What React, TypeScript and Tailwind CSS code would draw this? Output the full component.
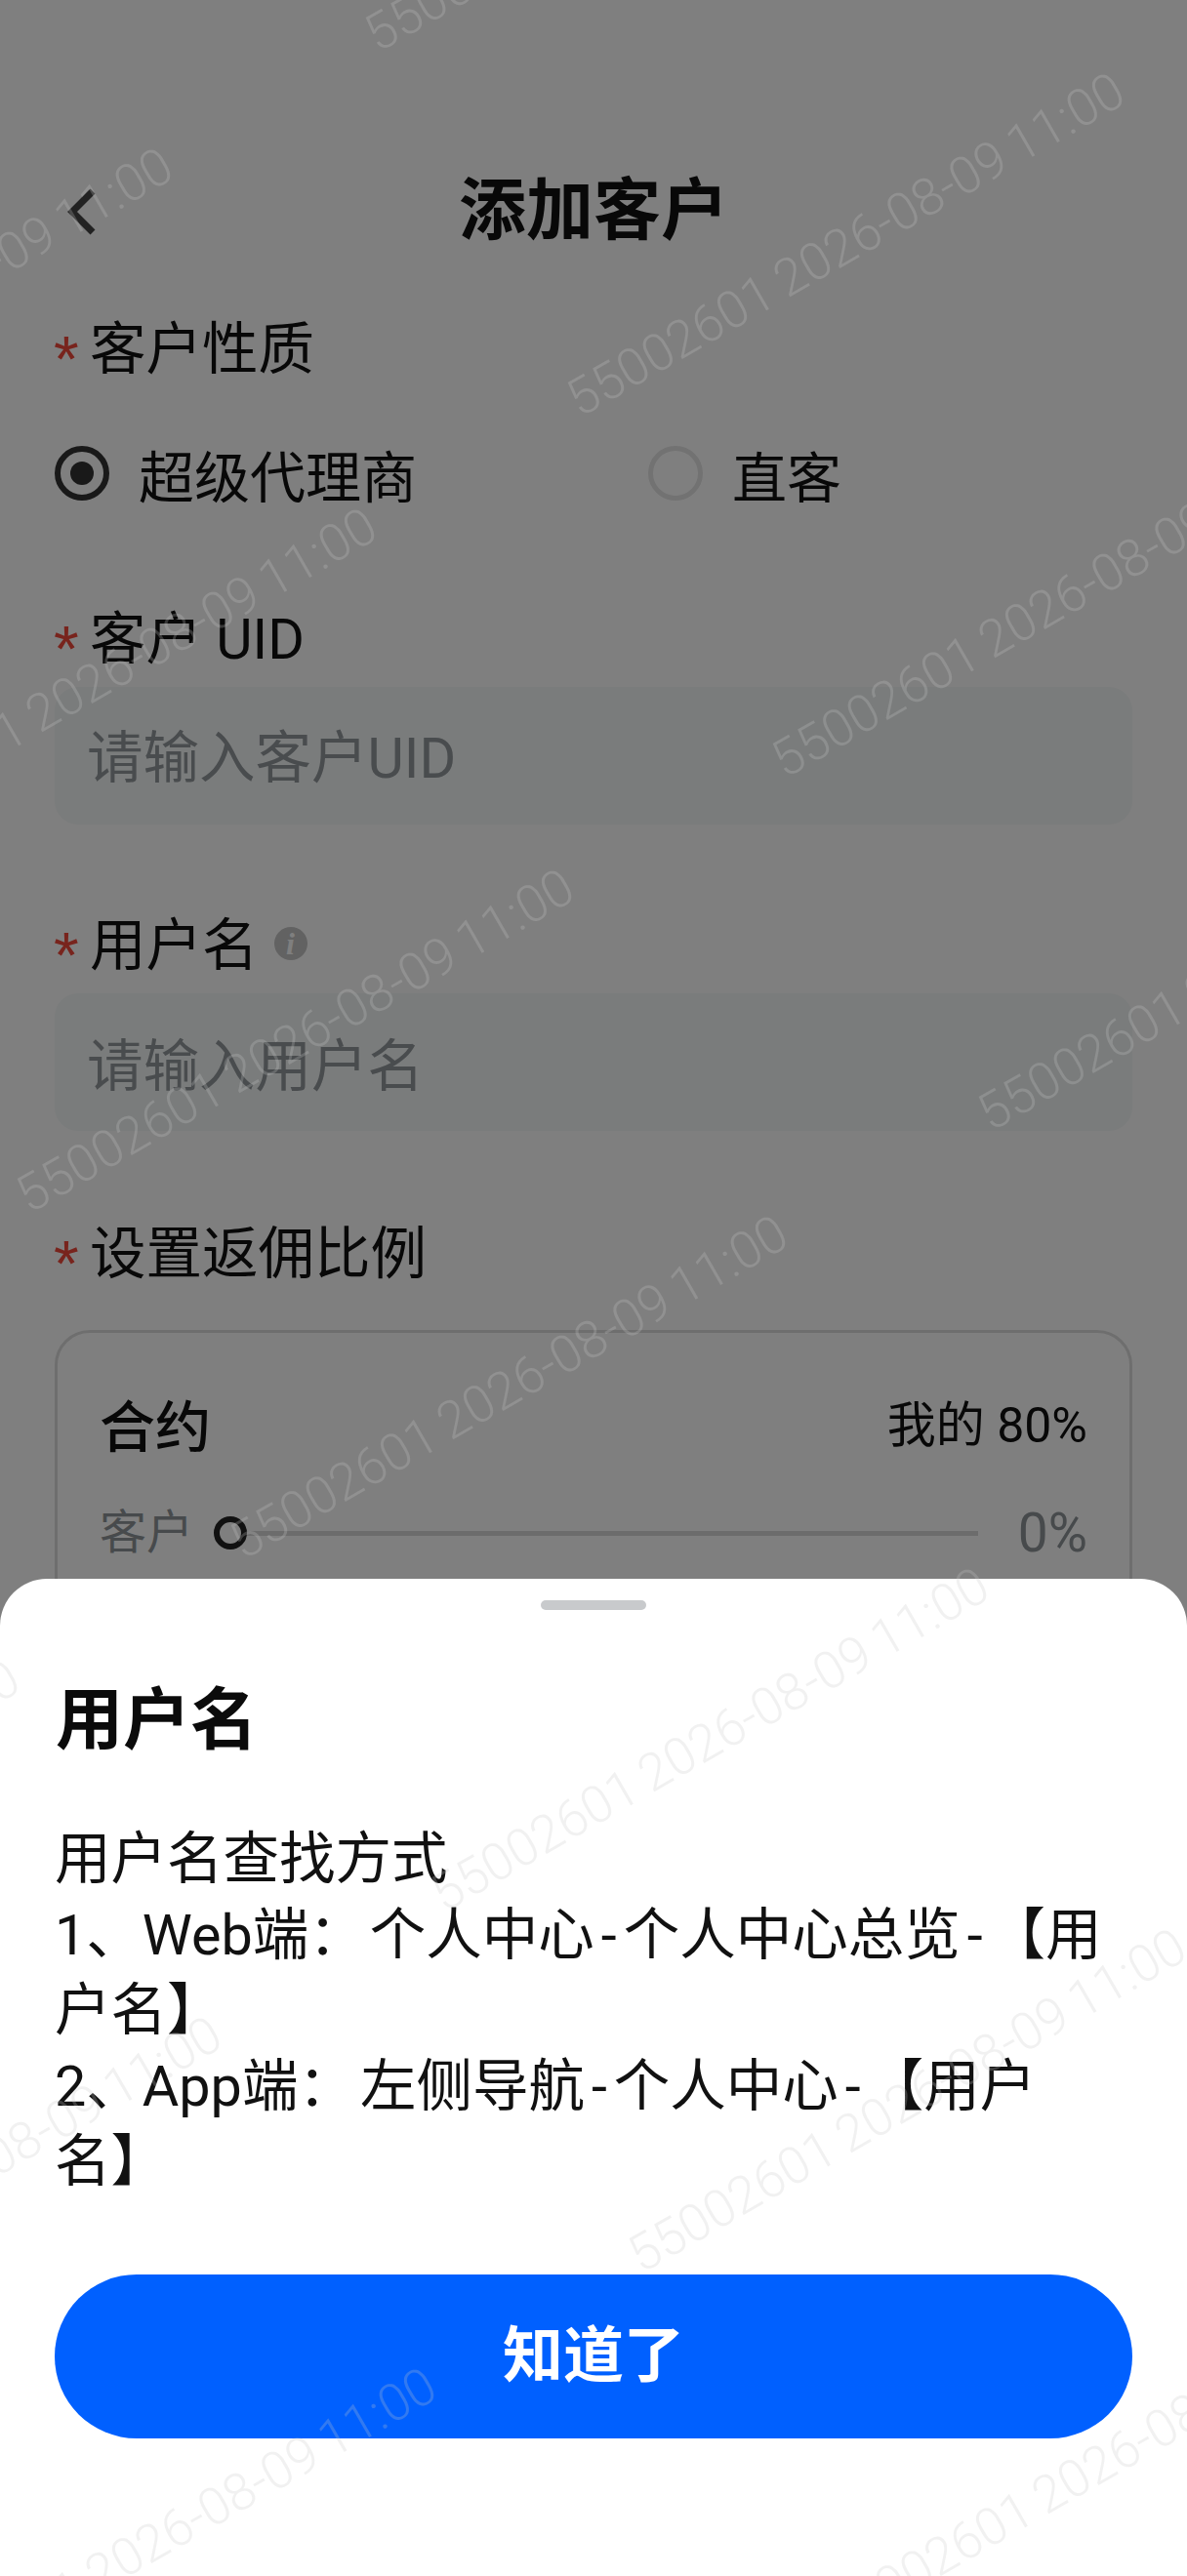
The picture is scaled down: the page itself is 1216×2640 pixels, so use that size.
import React from "react";

const WATERMARKS: [number, number][] = [
  [378, 39],
  [585, 413],
  [795, 783],
  [1006, 1145],
  [-390, 490],
  [-181, 859],
  [21, 1229],
  [240, 1584],
  [446, 1945],
  [648, 2315],
  [850, 2685],
  [-547, 2040],
  [-340, 2405],
  [-120, 2765],
];

function Label({ text, className, children }: { text: string; className: string; children?: React.ReactNode }) {
  return (
    <div className={`flex h-[80px] items-center ${className}`}>
      <span className="w-[36px] -ml-[1px] mr-[1px] pt-[17px] font-['Liberation_Sans',sans-serif] text-[66px] leading-none text-[#f0483a]">*</span>
      <span className="text-[57.5px] leading-[80px] text-[#111]">{text}</span>
      {children}
    </div>
  );
}

function Field({ placeholder, className }: { placeholder: string; className: string }) {
  return (
    <div className={`flex h-[141px] items-center rounded-[24px] bg-[#f5f8f8] pl-[33px] text-[57.5px] text-[#92989c] ${className}`}>
      {placeholder}
    </div>
  );
}

function Hy() {
  return <span className="mx-[7px]">-</span>;
}

export default function App() {
  return (
    <div className="relative h-[2640px] w-[1216px] overflow-hidden bg-white font-['Roboto','Noto_Sans_CJK_SC',sans-serif]">
      <div className="px-[56px]">
        <div className="mt-[175px] flex h-[84px] items-center justify-between">
          <svg className="ml-[13px]" width="30" height="48" viewBox="0 0 30 48" fill="none">
            <path d="M26 3 L5 24 L26 45" stroke="#444" strokeWidth="7" />
          </svg>
          <div className="text-[69px] font-bold leading-[84px] text-[#111]">添加客户</div>
          <div className="w-[43px]" />
        </div>

        <Label text="客户性质" className="mt-[60px]" />

        <div className="mt-[58px] flex h-[56px] items-center">
          <div className="flex w-[608px] items-center">
            <div className="flex h-[56px] w-[56px] items-center justify-center rounded-full border-[6px] border-[#333]">
              <div className="h-[24px] w-[24px] rounded-full bg-[#333]" />
            </div>
            <span className="ml-[30px] pt-[11px] text-[57px] leading-[64px] text-[#111]">超级代理商</span>
          </div>
          <div className="flex items-center">
            <div className="h-[56px] w-[56px] rounded-full border-[5px] border-[#e4e4e4]" />
            <span className="ml-[30px] pt-[11px] text-[56px] leading-[64px] text-[#111]">直客</span>
          </div>
        </div>

        <Label text="客户 UID" className="mt-[103px]" />
        <Field placeholder="请输入客户UID" className="mt-[8px] pt-[7px]" />

        <Label text="用户名" className="mt-[85px]">
          <span className="ml-[16px] mb-[6px] flex h-[34px] w-[34px] items-center justify-center rounded-full bg-[#c4c4c4] font-['Liberation_Serif',serif] text-[32px] font-bold italic leading-none text-white">
            i
          </span>
        </Label>
        <Field placeholder="请输入用户名" className="mt-[8px] pt-[11px]" />

        <Label text="设置返佣比例" className="mt-[87px]" />

        <div className="mt-[37px] h-[420px] rounded-[36px] border-[3px] border-[#ddd] px-[43px] pt-[58px]">
          <div className="flex h-[80px] items-center justify-between">
            <span className="text-[57px] font-medium text-[#111]">合约</span>
            <span className="pb-[6px] text-[50px] text-[#111]">我的 80%</span>
          </div>
          <div className="mt-[37px] flex h-[60px] items-center text-[48px] text-[#8f9599]">
            <span className="w-[117px]">客户</span>
            <div className="h-[34px] w-[34px] rounded-full border-[6px] border-[#222]" />
            <div className="h-[5px] w-[749px] bg-[#d8d8d8]" />
            <span className="ml-auto text-[55px]">0%</span>
          </div>
        </div>
      </div>

      <div className="absolute inset-0 bg-black/50" />

      <div className="absolute bottom-0 left-0 right-0 h-[1022px] rounded-t-[48px] bg-white px-[56px]">
        <div className="mx-auto mt-[22px] h-[10px] w-[108px] rounded-full bg-[#c8cacc]" />
        <div className="ml-[1px] mt-[66px] text-[69px] font-bold leading-[96px] text-[#0b0b0b]">用户名</div>
        <div className="mt-[55px] w-[1104px] text-[57.5px] leading-[77.5px] text-[#111]">
          <div>用户名查找方式</div>
          <div>
            1、Web端：<span className="ml-[5px]">个人中心</span><Hy />个人中心总览<Hy />【用<br />户名】
          </div>
          <div>
            2、App端：<span className="ml-[6px]">左侧导航</span><Hy />个人中心<Hy />【用户<br />名】
          </div>
        </div>
        <div className="mt-[76px] flex h-[168px] items-center justify-center rounded-full bg-[#0060ff] text-[62px] font-semibold text-white">
          知道了
        </div>
      </div>

      {WATERMARKS.map(([x, y]) => (
        <div
          key={`${x}-${y}`}
          className="pointer-events-none absolute origin-[0_50%] -rotate-[30deg] whitespace-nowrap text-[53px] font-light leading-[52px] text-[#c8c8c8]/25 [word-spacing:-3px]"
          style={{ left: x, top: y - 26 }}
        >
          55002601 2026-08-09 11:00
        </div>
      ))}
    </div>
  );
}
